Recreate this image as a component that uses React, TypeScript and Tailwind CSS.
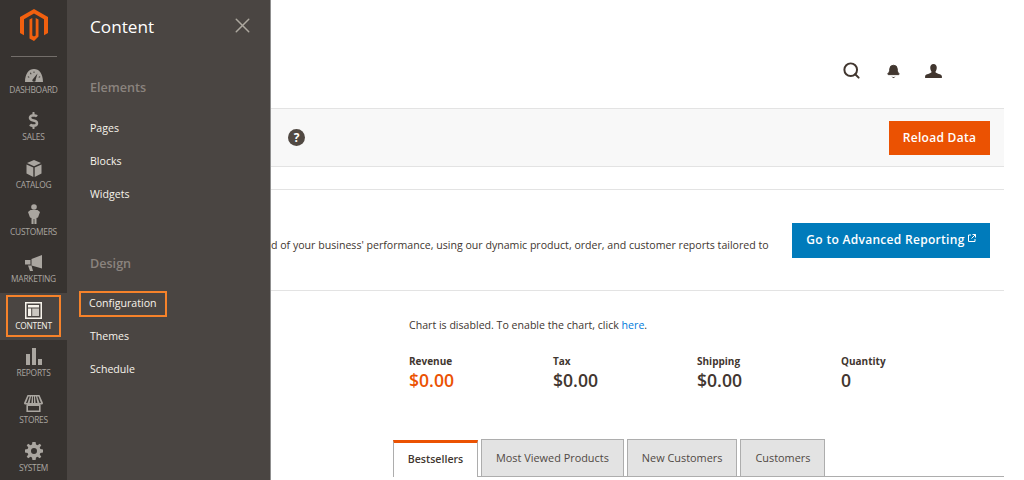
import React from "react";
import { Search, Bell, X } from "lucide-react";
import { FaDollarSign } from "react-icons/fa";

const MagentoLogo = () => (
  <svg width="28" height="32" viewBox="0 0 28 32" fill="#f1600f">
    <path d="M14 0 L28 8 V24 L24 26.3 V10.3 L14 4.5 L4 10.3 V26.3 L0 24 V8 Z" />
    <path d="M9.5 10.5 L12.3 8.9 V26.5 L14 27.5 L15.7 26.5 V8.9 L18.5 10.5 V27.5 L14 32 L9.5 29.4 Z" />
  </svg>
);

const Gauge = () => (
  <svg width="18" height="13" viewBox="0 0 18 13" fill="currentColor">
    <path fillRule="evenodd" d="M0 13 C0 4.5 4 0 9 0 C14 0 18 4.5 18 13 Z M7.6 10.5 A1.6 1.6 0 1 0 10.6 11 L12.5 4.5 Z M2.6 8 L4 8.8 L4.5 8 L3.1 7.2 Z M4.9 4 L5.8 5.4 L6.6 4.9 L5.7 3.5 Z M8.6 2.4 V4 H9.4 V2.4 Z M14.9 7.2 L13.5 8 L14 8.8 L15.4 8 Z" />
  </svg>
);

const Box = () => (
  <svg width="16" height="17" viewBox="0 0 16 17" fill="currentColor">
    <path d="M8 0 L15 3 L8 6.2 L1 3 Z" />
    <path d="M0.5 4.5 L7.3 7.5 V17 L0.5 13.5 Z" />
    <path d="M15.5 4.5 L8.7 7.5 V17 L15.5 13.5 Z" />
  </svg>
);

const Person = () => (
  <svg width="12" height="20" viewBox="0 0 12 20" fill="currentColor">
    <circle cx="6" cy="3" r="2.8" />
    <path d="M2.5 6 H9.5 L12 8 L10 13.5 L8.5 14 V20 H6.4 V15 H5.6 V20 H3.5 V14 L2 13.5 L0 8 Z" />
  </svg>
);

const Megaphone = () => (
  <svg width="18" height="16" viewBox="0 0 18 16" fill="currentColor">
    <path d="M17 0 V13.5 L6.5 10.5 V4 Z" />
    <rect x="0" y="5" width="5.5" height="4.5" />
    <path d="M3 10.5 H6.5 L8 16 H5 Z" />
  </svg>
);

const Layout = () => (
  <svg width="17" height="17" viewBox="0 0 17 17" fill="currentColor">
    <path fillRule="evenodd" d="M0 0 H17 V17 H0 Z M1.5 1.5 V15.5 H15.5 V1.5 Z" />
    <rect x="3" y="3" width="11" height="2.5" />
    <rect x="3" y="6.5" width="3.2" height="7.5" />
    <rect x="7.2" y="6.5" width="6.8" height="7.5" opacity="0.75" />
  </svg>
);

const Bars = () => (
  <svg width="16" height="17" viewBox="0 0 16 17" fill="currentColor">
    <rect x="0" y="6" width="4" height="11" />
    <rect x="6" y="0" width="4" height="17" />
    <rect x="12" y="11" width="4" height="6" />
  </svg>
);

const Store = () => (
  <svg width="19" height="17" viewBox="0 0 19 17" fill="currentColor">
    <path fillRule="evenodd" d="M3.5 0 H15.5 L19 8 C19 9.5 17.5 10 16.6 9 V17 H2.4 V9 C1.5 10 0 9.5 0 8 Z M4.5 1.5 L2 8 H3.5 L5.8 1.5 Z M7 1.5 L5.6 8 H7.4 L8 1.5 Z M9 1.5 V8 H10 V1.5 Z M11 1.5 L11.6 8 H13.4 L12 1.5 Z M13.2 1.5 L15.5 8 H17 L14.5 1.5 Z M4 11 V15.5 H15 V11 Z" />
  </svg>
);

const Gear = () => (
  <svg width="18" height="18" viewBox="0 0 18 18" fill="currentColor">
    <path fillRule="evenodd" d="M7.4 0 H10.6 L11 2.6 L12.6 3.3 L14.7 1.7 L16.3 3.3 L14.7 5.4 L15.4 7 L18 7.4 V10.6 L15.4 11 L14.7 12.6 L16.3 14.7 L14.7 16.3 L12.6 14.7 L11 15.4 L10.6 18 H7.4 L7 15.4 L5.4 14.7 L3.3 16.3 L1.7 14.7 L3.3 12.6 L2.6 11 L0 10.6 V7.4 L2.6 7 L3.3 5.4 L1.7 3.3 L3.3 1.7 L5.4 3.3 L7 2.6 Z M9 6 A3 3 0 1 0 9 12 A3 3 0 1 0 9 6 Z" />
  </svg>
);

const navItems = [
  { label: "DASHBOARD", icon: <Gauge /> },
  { label: "SALES", icon: <FaDollarSign size={17} /> },
  { label: "CATALOG", icon: <Box /> },
  { label: "CUSTOMERS", icon: <Person /> },
  { label: "MARKETING", icon: <Megaphone /> },
  { label: "CONTENT", icon: <Layout />, active: true },
  { label: "REPORTS", icon: <Bars /> },
  { label: "STORES", icon: <Store /> },
  { label: "SYSTEM", icon: <Gear /> },
];

const Sidebar = () => (
  <aside className="w-[67px] shrink-0 bg-[#373330] flex flex-col">
    <div className="h-[57px] shrink-0 flex flex-col items-center pt-[9px]">
      <MagentoLogo />
      <div className="mt-auto w-[46px] h-px bg-[#736e6a]" />
    </div>
    {navItems.map((item) =>
      item.active ? (
        <div key={item.label} className="h-[47px] shrink-0 bg-[#4a4542] flex items-center justify-center">
          <div className="w-[55px] h-[42px] border-2 border-[#f6822a] flex flex-col items-center justify-end pb-[4px] text-[#f7f3eb]">
            {item.icon}
            <span className="text-[8.4px] tracking-[-0.25px] leading-[11px] mt-[1px]">{item.label}</span>
          </div>
        </div>
      ) : (
        <div key={item.label} className="h-[47.2px] shrink-0 flex flex-col items-center justify-end pb-[9px] text-[#aaa6a0]">
          {item.icon}
          <span className="text-[8.4px] tracking-[-0.25px] leading-[11px] mt-[2px]">{item.label}</span>
        </div>
      )
    )}
  </aside>
);

const SubMenu = ({ title, links, className, listClass }: { title: string; links: string[]; className: string; listClass: string }) => (
  <div className={className}>
    <h3 className="text-[12.6px] leading-[18px] font-semibold text-[#8a837e] pl-[23px]">{title}</h3>
    <ul className={`flex flex-col ${listClass}`}>
      {links.map((link) => (
        <li key={link} className="h-[33px] flex items-start">
          {link === "Configuration" ? (
            <span className="ml-[12px] -mt-[4px] px-[8px] h-[26px] flex items-center border-2 border-[#f6822a] text-[10.6px] text-[#f7f3eb]">
              {link}
            </span>
          ) : (
            <span className="pl-[23px] text-[10.6px] leading-[16px] text-[#f7f3eb]">{link}</span>
          )}
        </li>
      ))}
    </ul>
  </div>
);

const ContentMenu = () => (
  <div className="absolute left-[67px] top-0 h-[480px] w-[204px] bg-[#4a4542] border-r border-[#8f8f8f]">
    <div className="flex items-center justify-between pl-[23px] pr-[15px] h-[54px]">
      <h2 className="text-[17.2px] text-white">Content</h2>
      <X size={25} strokeWidth={1.4} className="text-[#ada89f] -mt-[4px]" />
    </div>
    <SubMenu title="Elements" links={["Pages", "Blocks", "Widgets"]} className="mt-[25px]" listClass="mt-[23px]" />
    <SubMenu title="Design" links={["Configuration", "Themes", "Schedule"]} className="mt-[36px]" listClass="mt-[22px]" />
  </div>
);

const stats = [
  { label: "Revenue", value: "$0.00", color: "text-[#eb5202]" },
  { label: "Tax", value: "$0.00", color: "text-[#41362f]" },
  { label: "Shipping", value: "$0.00", color: "text-[#41362f]" },
  { label: "Quantity", value: "0", color: "text-[#41362f]" },
];

const tabs = ["Most Viewed Products", "New Customers", "Customers"];

const Main = () => (
  <main className="flex-1 min-w-0 pr-[20px] flex flex-col">
    <header className="h-[108px] shrink-0 flex justify-end items-start pt-[61px] pr-[62px] gap-[24.5px] text-[#41362f]">
      <Search size={19} strokeWidth={2.5} />
      <Bell size={15} fill="currentColor" strokeWidth={1.5} className="mt-[3px]" />
      <svg width="17" height="14" viewBox="0 0 18 15" fill="currentColor" className="mt-[3px]">
        <path d="M9 0 C11.5 0 12.5 2 12.5 4 C12.5 6 11.5 7.5 11 8.5 C11.5 10.5 18 10.5 18 13 V15 H0 V13 C0 10.5 6.5 10.5 7 8.5 C6.5 7.5 5.5 6 5.5 4 C5.5 2 6.5 0 9 0 Z" />
      </svg>
    </header>

    <section className="h-[59px] shrink-0 bg-[#f8f8f8] border-y border-[#e3e3e3] flex items-center justify-between pl-[221px] pr-[14px]">
      <span className="w-[17px] h-[17px] rounded-full bg-[#514943] text-white text-[12px] font-bold flex items-center justify-center">?</span>
      <button className="w-[101px] h-[34px] bg-[#eb5202] text-white text-[12px] font-semibold tracking-[0.3px]">Reload Data</button>
    </section>

    <section className="mt-[22px] h-[102px] shrink-0 border-y border-[#e3e3e3] flex items-center justify-between pl-[204px] pr-[14px]">
      <p className="text-[10.6px] leading-[16px] mt-[9px] text-[#41362f] whitespace-nowrap">
        d of your business' performance, using our dynamic product, order, and customer reports tailored to
      </p>
      <button className="w-[198px] h-[35px] bg-[#007bbb] text-white text-[12px] font-semibold tracking-[0.3px] flex items-center justify-center gap-[3px]">
        Go to Advanced Reporting
        <svg width="8" height="8" viewBox="0 0 8 8" fill="none" stroke="currentColor" strokeWidth="1" className="-mt-[4px]">
          <path d="M3 1 H0.5 V7.5 H7 V5 M4.5 0.5 H7.5 V3.5 M7.5 0.5 L3.5 4.5" />
        </svg>
      </button>
    </section>

    <section className="pl-[342px] pt-[26px] shrink-0">
      <p className="text-[10.6px] leading-[16px] text-[#41362f]">
        Chart is disabled. To enable the chart, click <a className="text-[#007bdb]">here</a>.
      </p>
      <div className="mt-[21px] grid grid-cols-[144px_144px_144px_144px]">
        {stats.map((s) => (
          <div key={s.label} className="flex flex-col">
            <span className="text-[10px] leading-[14px] font-bold text-[#41362f]">{s.label}</span>
            <span className={`text-[17.6px] leading-[24px] font-semibold ${s.color}`}>{s.value}</span>
          </div>
        ))}
      </div>
    </section>

    <div className="ml-[326px] mt-[48px] h-[37px] shrink-0 flex items-end gap-[3px] border-b border-[#adadad]">
      <div className="w-[85px] h-[37px] -mb-px bg-white border-x border-[#adadad] border-t-[3px] border-t-[#eb5202] flex items-center justify-center text-[10.6px] font-semibold text-[#41362f]">
        Bestsellers
      </div>
      {tabs.map((t) => (
        <div key={t} className="h-[37px] px-[14px] bg-[#e3e3e3] border border-[#adadad] border-b-0 flex items-center text-[10.9px] font-medium text-[#514943]">
          {t}
        </div>
      ))}
    </div>
  </main>
);

export default function App() {
  return (
    <div className="relative flex h-[480px] w-[1024px] overflow-hidden bg-white font-['Open_Sans',sans-serif]">
      <Sidebar />
      <Main />
      <ContentMenu />
    </div>
  );
}
